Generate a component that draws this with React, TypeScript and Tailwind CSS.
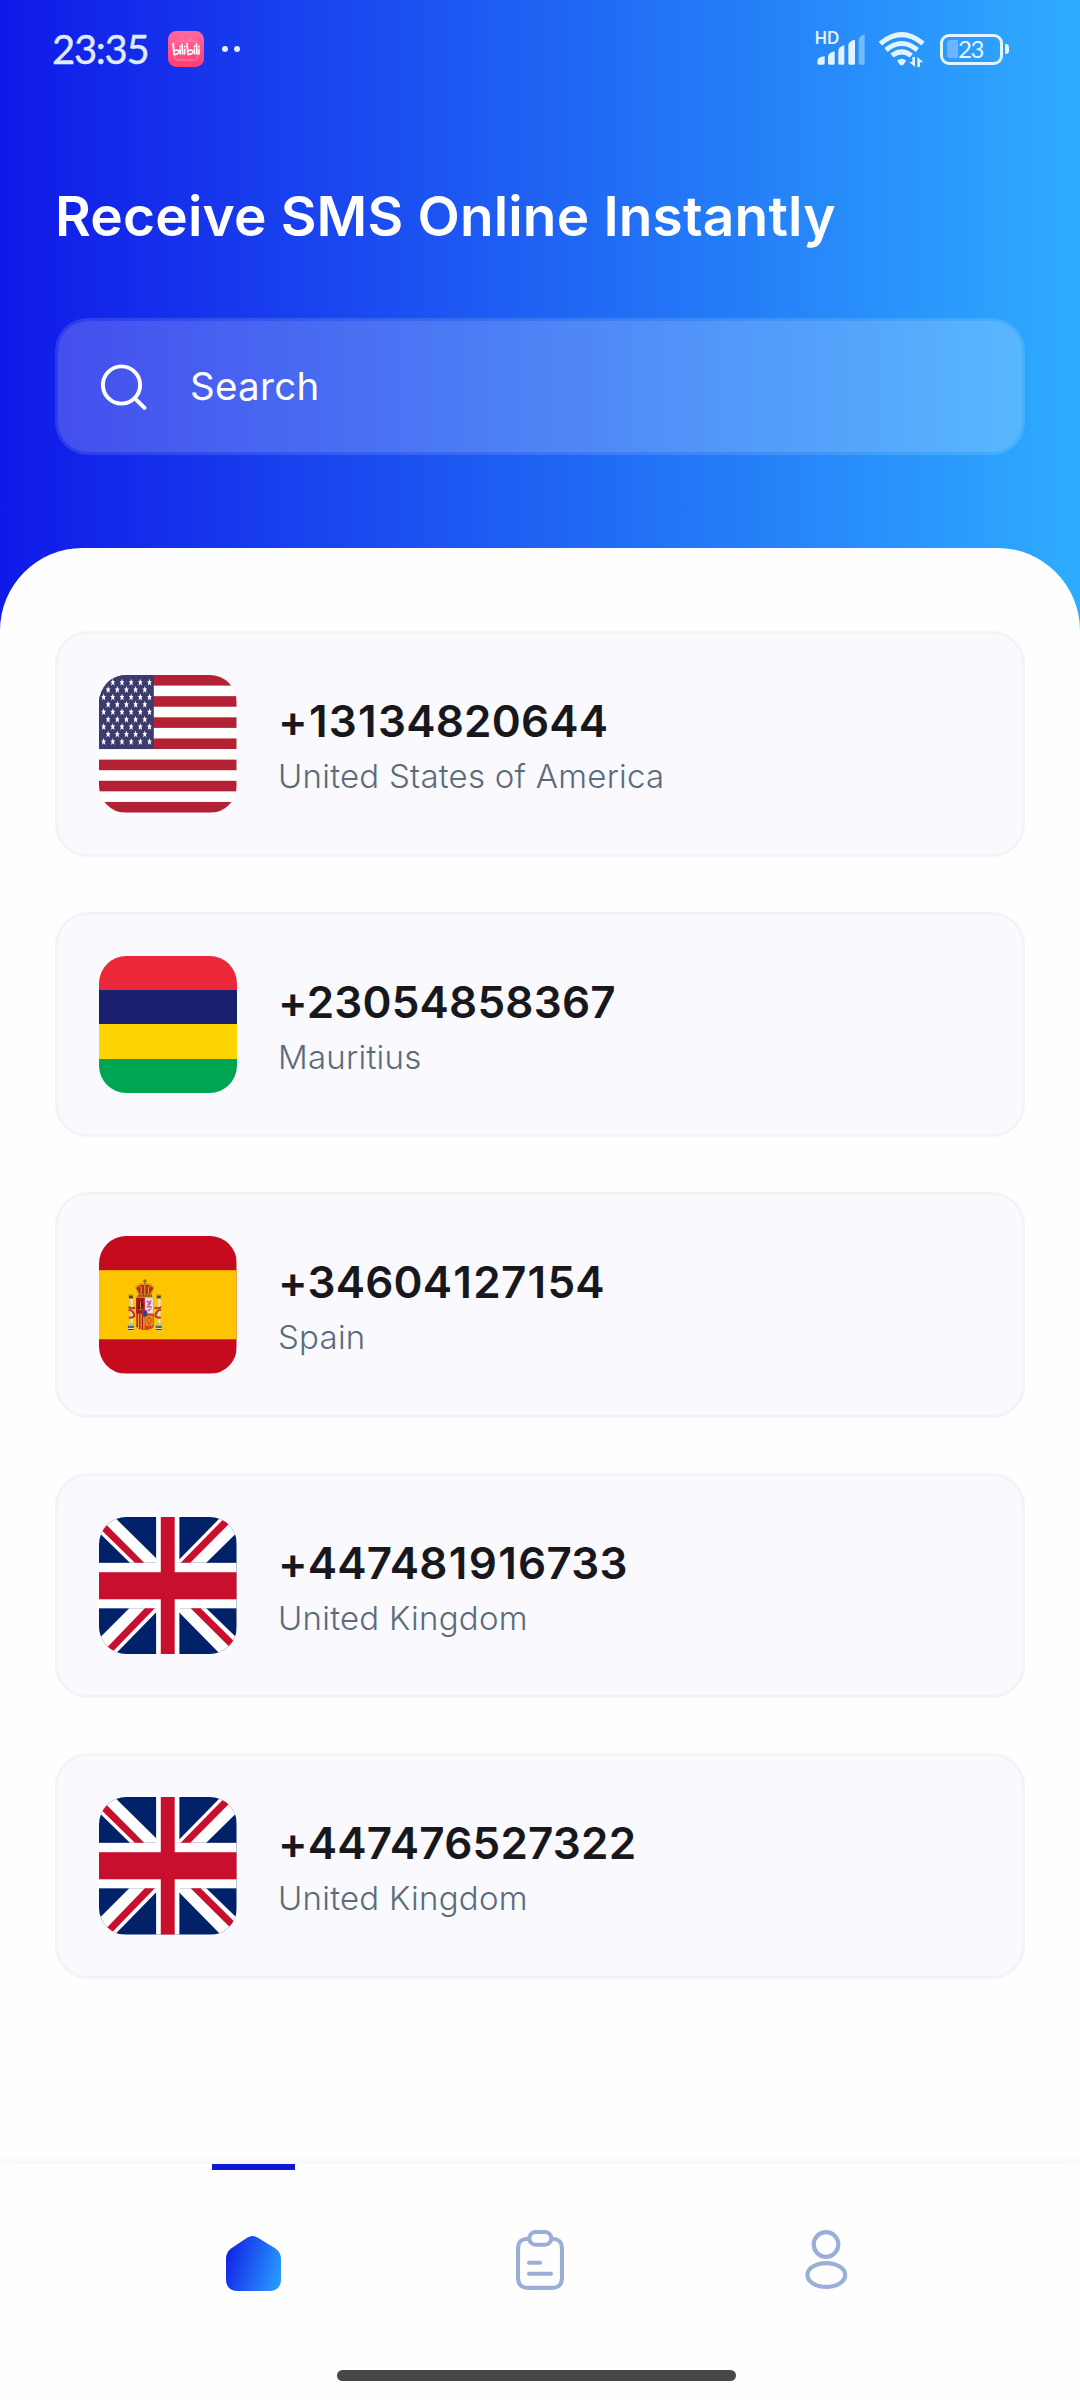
import type { ReactNode } from "react";

type Country = "us" | "mu" | "es" | "gb";

const numbers: { phone: string; country: string; flag: Country }[] = [
  { phone: "+13134820644", country: "United States of America", flag: "us" },
  { phone: "+23054858367", country: "Mauritius", flag: "mu" },
  { phone: "+34604127154", country: "Spain", flag: "es" },
  { phone: "+447481916733", country: "United Kingdom", flag: "gb" },
  { phone: "+447476527322", country: "United Kingdom", flag: "gb" },
];

const STAR =
  "0,-11 2.2,-3.500 7,-3.500 3.4,1.500 5.2,10 0,5 -5.2,10 -3.4,1.500 -7,-3.500 -2.2,-3.500";

function UsFlag() {
  const stars: ReactNode[] = [];
  for (let row = 0; row < 9; row++) {
    const count = row % 2 === 0 ? 6 : 5;
    const start = row % 2 === 0 ? 14 : 27.5;
    for (let i = 0; i < count; i++) {
      stars.push(
        <polygon
          key={`${row}-${i}`}
          points={STAR}
          transform={`translate(${start + i * 27.6} ${22 + row * 22.3})`}
        />,
      );
    }
  }
  return (
    <svg viewBox="0 0 414 414" preserveAspectRatio="none" className="size-full">
      <rect width="414" height="414" fill="#fff" />
      {[0, 2, 4, 6, 8, 10, 12].map((n) => (
        <rect key={n} y={n * 31.85} width="414" height="31.85" fill="#b22234" />
      ))}
      <rect width="165" height="222.9" fill="#3c3b6e" />
      <g fill="#fff">{stars}</g>
    </svg>
  );
}

function MauritiusFlag() {
  return (
    <div className="grid size-full grid-rows-4">
      <div className="bg-[#ea2839]" />
      <div className="bg-[#1a206d]" />
      <div className="bg-[#ffd500]" />
      <div className="bg-[#00a551]" />
    </div>
  );
}

function SpainFlag() {
  return (
    <svg viewBox="57 48 414 414" className="size-full">
      <rect x="57" y="48" width="414" height="414" fill="#c60b1e" />
      <rect x="57" y="151" width="414" height="208" fill="#ffc400" />
      {/* pillars */}
      {[153, 237].map((x) => (
        <g key={x}>
          <rect x={x - 5} y="234" width="10" height="86" fill="#e9e3d3" />
          <rect x={x - 4} y="238" width="3" height="80" fill="#b9b29c" />
          <rect x={x - 7} y="224" width="14" height="6" fill="#aa8a2a" />
          <rect x={x - 6} y="229" width="12" height="7" fill="#5b3a1d" />
          <rect x={x - 8} y="310" width="16" height="7" fill="#e8c33c" />
          <rect x={x - 9} y="318" width="18" height="7" fill="#2f6f9a" />
          <rect x={x - 9} y="325" width="18" height="7" fill="#d9dfd8" />
          <rect x={x - 9} y="328" width="18" height="3" fill="#1c4f6c" />
        </g>
      ))}
      <path d="M146 262q8 6 20 2M146 270q10 0 16 12t-15 12M244 262q-8 6-20 2M244 270q-10 0-16 12t15 12" fill="none" stroke="#b8372a" strokeWidth="6" />
      {/* shield */}
      <path d="M169 234h52v84q0 10-26 13q-26-3-26-13z" fill="#c8202a" />
      <path d="M169 234h26v48h-26z" fill="#b3121f" />
      <path d="M195 234h26v48h-26z" fill="#ecd9de" />
      <path d="M169 282h26v48q-26-2-26-12z" fill="#e8a41c" />
      <path d="M172 282v40M180 282v46M188 282v48" stroke="#b3121f" strokeWidth="4" />
      <path d="M195 282h26v36q0 10-26 12z" fill="#d6421c" />
      <path d="M199 290h18v26h-18zM199 290l18 26M217 290l-18 26" fill="none" stroke="#f0a81e" strokeWidth="3" />
      <path d="M176 246h6v-4h4v12h4v6h-5v12h-10v-12h5z" fill="#2e1d0c" />
      <path d="M182 245v22M176 270h12" stroke="#e0aa2a" strokeWidth="2.5" />
      <path d="M201 244l7 5 7-6M203 255l10-4M201 262l8-3 6 6M204 274l8-6" fill="none" stroke="#b7468b" strokeWidth="4" />
      <ellipse cx="195" cy="281" rx="8" ry="11" fill="#6a4a6a" />
      <ellipse cx="195" cy="281" rx="4.5" ry="7" fill="#27427e" />
      {/* crown */}
      <path d="M176 222h38l4 9h-46z" fill="#8d4a12" />
      <path d="M167 203q12-12 28-8q16-4 28 8l-9 21h-38z" fill="#b42a1d" />
      <path d="M167 205q10-12 17-2v20M223 205q-10-12-17-2v20M195 194v29M168 206l10 17M222 206l-10 17" fill="none" stroke="#d99a28" strokeWidth="3.5" />
      <path d="M195 178v16M189 184h12" stroke="#76682a" strokeWidth="4" />
      <path d="M170 199q10-12 25-6q15-6 25 6" fill="none" stroke="#a07e22" strokeWidth="3" strokeDasharray="3 3" />
      <path d="M176 225h38" stroke="#e2b33c" strokeWidth="3" strokeDasharray="5 3" />
    </svg>
  );
}

function UkFlag() {
  return (
    <svg viewBox="57 51 414 411" preserveAspectRatio="none" className="size-full">
      <rect x="57" y="51" width="414" height="411" fill="#012169" />
      <g fill="#fff">
        <polygon points="57,51 103,51 243,188 150,188 57,97" />
        <polygon points="424,51 471,51 471,99 380,188 289,188" />
        <polygon points="57,414 148,324 241,324 105,462 57,462" />
        <polygon points="286,324 380,324 471,411 471,462 423,462" />
        <rect x="57" y="188" width="414" height="136" />
        <rect x="229" y="51" width="70" height="411" />
      </g>
      <g fill="#c8102e">
        <polygon points="57,52 193,188 165,188 57,83" />
        <polygon points="438,51 471,49 332,188 303,188" />
        <polygon points="57,466 195,324 225,324 90,462" />
        <polygon points="333,324 363,324 471,430 473,462" />
        <rect x="57" y="216" width="414" height="81" />
        <rect x="243" y="51" width="42" height="411" />
      </g>
    </svg>
  );
}

const flags: Record<Country, () => ReactNode> = {
  us: UsFlag,
  mu: MauritiusFlag,
  es: SpainFlag,
  gb: UkFlag,
};

function BilibiliIcon() {
  return (
    <svg viewBox="0 0 108 108" className="ml-[21px] size-9">
      <defs>
        <linearGradient id="bili" x1="0" y1="0" x2="0" y2="1">
          <stop offset="0" stopColor="#ff6a9d" />
          <stop offset="1" stopColor="#ff3d72" />
        </linearGradient>
      </defs>
      <rect width="108" height="108" rx="25" fill="url(#bili)" />
      <rect x="19" y="31" width="70" height="56" rx="12" fill="none" stroke="#ff8fac" strokeWidth="6" opacity=".45" />
      <path d="M38 19l9 11M70 19l-9 11" stroke="#ff8fac" strokeWidth="5" opacity=".6" />
      <g fill="none" stroke="#fff" strokeWidth="5" strokeLinecap="round" strokeLinejoin="round">
        <path d="M15 38l3 33q15-2 15-9q-2-7-14-3" />
        <path d="M36 55l1 14M42 40l2 29M50 55v14M50 46v1M36 46v1" />
        <path d="M57 38l3 33q15-2 15-9q-2-7-14-3" />
        <path d="M79 55l1 14M85 40l2 29M93 55v14M93 46v1M79 46v1" />
      </g>
    </svg>
  );
}

function SignalIcon() {
  return (
    <svg viewBox="0 0 150 100" className="h-[33.33px] w-[50px] overflow-visible">
      <text x="-1" y="36" fontSize="50" fontWeight="700" fontFamily="Lato, sans-serif" fill="#e4f3ff" textLength="73" lengthAdjust="spacingAndGlyphs">
        HD
      </text>
      <g fill="#e4f3ff">
        <path d="M7 94v-8q2-12 22-13v21q0 4-4 4h-14q-4 0-4-4z" />
        <path d="M39 94V73q2-12 20-15v36q0 4-4 4H43q-4 0-4-4z" />
        <path d="M70 94V56q2-12 18-16v54q0 4-4 4H74q-4 0-4-4z" />
        <path d="M100 94V39q2-12 20-16v71q0 4-4 4h-12q-4 0-4-4z" />
      </g>
      <path d="M131 94V23q2-12 18-16v87q0 4-4 4h-10q-4 0-4-4z" fill="#74baff" />
    </svg>
  );
}

function WifiIcon() {
  return (
    <svg viewBox="295 95 142 110" className="ml-[13px] h-[36.67px] w-[47.33px]">
      <g fill="none" stroke="#e4f3ff" strokeWidth="15">
        <path d="M302 133Q366 79 430 133" />
        <path d="M319 152Q366 113 413 152" />
        <path d="M337 169Q366 146 395 169" />
      </g>
      <path d="M352 184q14-12 28 0l-9 12q-5 4-10 0z" fill="#e4f3ff" />
      <path d="M406 173v30l-17-15h9v-15zM413 203v-30l18 16h-10v14z" fill="#e4f3ff" />
    </svg>
  );
}

function Battery() {
  return (
    <div className="ml-[15px] flex items-center gap-[2px]">
      <div className="flex h-[31px] w-[63px] items-center rounded-[9px] border-[3.5px] border-[#e4f3ff] pl-[4px]">
        <div className="h-[18px] w-[11px] rounded-l-[3px] bg-[#6fb4ff]" />
        <span className="font-[Lato,sans-serif] text-[24px] leading-none tracking-[-1.4px] text-[#eaf6ff]">23</span>
      </div>
      <div className="h-[10px] w-[4px] rounded-r-[3px] rounded-l-[1px] bg-[#e4f3ff]" />
    </div>
  );
}

function StatusBar() {
  return (
    <div className="flex h-[98px] items-center justify-between pr-[71px] pl-[52px]">
      <div className="flex items-center">
        <span className="w-[95px] font-[Lato,sans-serif] text-[40px] leading-none tracking-[-1.3px] whitespace-nowrap text-[#dfe9ff] [-webkit-text-stroke:0.4px_#dfe9ff]">
          23:35
        </span>
        <BilibiliIcon />
        <div className="ml-[18px] flex gap-[6px]">
          <div className="size-[6px] rounded-full bg-[#e4edff]" />
          <div className="size-[6px] rounded-full bg-[#e4edff]" />
        </div>
      </div>
      <div className="flex items-center">
        <SignalIcon />
        <WifiIcon />
        <Battery />
      </div>
    </div>
  );
}

function SearchBox() {
  return (
    <div className="mx-[55px] mt-[67px] flex h-[137px] items-center rounded-[33px] border-[3px] border-white/12 bg-white/21 bg-clip-padding pl-[43px]">
      <svg viewBox="0 0 46 46" className="size-[46px]" fill="none" stroke="#fff" strokeWidth="3.9" strokeLinecap="round">
        <circle cx="20.5" cy="21" r="18.6" />
        <path d="M35.5 36L43.5 43.8" />
      </svg>
      <span className="ml-[43px] text-[38.5px] leading-none font-[370] tracking-[0.3px] text-white">Search</span>
    </div>
  );
}

/** Phone number with slightly wider side bearings on the narrow digit 1. */
function PhoneNumber({ value }: { value: string }) {
  return (
    <div className="text-[44px] leading-[55px] font-semibold tracking-[0.2px] text-[#18181c]">
      {value.split(/(1)/).map((part, i) =>
        part === "1" ? (
          <span key={i} className="mx-[1.1px]">
            1
          </span>
        ) : (
          part
        ),
      )}
    </div>
  );
}

function NumberCard({ phone, country, flag }: (typeof numbers)[number]) {
  const Flag = flags[flag];
  return (
    <li className="flex h-[225.5px] items-center rounded-[33px] border-[3px] border-[#f3f3f8] bg-[#f9f9fe] pl-[41px]">
      <div className="size-[137.5px] shrink-0 overflow-hidden rounded-[27.5px]">
        <Flag />
      </div>
      <div className="mt-[11px] ml-[41.5px]">
        <PhoneNumber value={phone} />
        <div className="text-[33px] leading-[55px] font-[350] tracking-[0.25px] text-[#5a6b7b]">{country}</div>
      </div>
    </li>
  );
}

function HomeIcon() {
  return (
    <svg viewBox="0 0 55 55" className="size-[55px]">
      <defs>
        <linearGradient id="home" x1="0" y1=".35" x2="1" y2=".65">
          <stop offset="0" stopColor="#1123e6" />
          <stop offset="1" stopColor="#2898ff" />
        </linearGradient>
      </defs>
      <path d="M21.500 1.500Q26.500-1.500 31.500 1.500L49.500 12.500Q55 16.500 55 23V43Q55 55 43 55H12Q0 55 0 43V23Q0 16.500 5 12.500Z" fill="url(#home)" />
    </svg>
  );
}

function ClipboardIcon() {
  return (
    <svg viewBox="0 0 48 60" className="h-[60px] w-[48px]" fill="none" stroke="#9bafd6" strokeWidth="4.1" strokeLinecap="round">
      <path d="M12.500 8.700C4.500 9 2 12 2 19V46.500C2 55 5 57.900 13 57.900H35C43 57.900 46 55 46 46.500V19C46 12 43.500 9 36 8.700" />
      <rect x="13.300" y="2" width="22" height="12.700" rx="6.300" />
      <path d="M13 32.700H24M13 43.700H35" />
    </svg>
  );
}

function ProfileIcon() {
  return (
    <svg viewBox="0 0 43 60" className="h-[60px] w-[43px]" fill="none" stroke="#9bafd6" strokeWidth="4.2">
      <circle cx="21" cy="14.500" r="12.300" />
      <ellipse cx="21.300" cy="45" rx="18.900" ry="11.900" />
    </svg>
  );
}

function BottomNav() {
  return (
    <nav className="h-[236px] bg-[#fefefe] px-[110px] shadow-[0_-4px_10px_rgba(0,0,0,0.03)]">
      <div className="grid h-[206px] grid-cols-3">
        <div className="flex flex-col items-center">
          <div className="h-[6px] w-[83px] bg-[#0d19d3]" />
          <div className="mt-[66px]">
            <HomeIcon />
          </div>
        </div>
        <div className="flex justify-center pt-[66px]">
          <ClipboardIcon />
        </div>
        <div className="flex justify-center pt-[66px]">
          <ProfileIcon />
        </div>
      </div>
      <div className="mx-auto h-[11px] w-[399px] -translate-x-[4px] rounded-full bg-[#474747]" />
    </nav>
  );
}

export default function App() {
  return (
    <div className="flex h-[2400px] w-[1080px] flex-col overflow-hidden bg-linear-to-r/srgb from-[#1019e8] to-[#2eacff] font-[Inter,sans-serif]">
      <header className="h-[548px]">
        <StatusBar />
        <h1 className="mt-[83px] ml-[55px] text-[55px] leading-[70px] font-semibold tracking-[0.17px] whitespace-nowrap text-white">
          Receive SMS Online Instantly
        </h1>
        <SearchBox />
      </header>
      <main className="flex-1 rounded-t-[82.5px] bg-[#fefefe] px-[55px] pt-[83px]">
        <ul className="flex flex-col gap-[55px]">
          {numbers.map((n) => (
            <NumberCard key={n.phone} {...n} />
          ))}
        </ul>
      </main>
      <BottomNav />
    </div>
  );
}
